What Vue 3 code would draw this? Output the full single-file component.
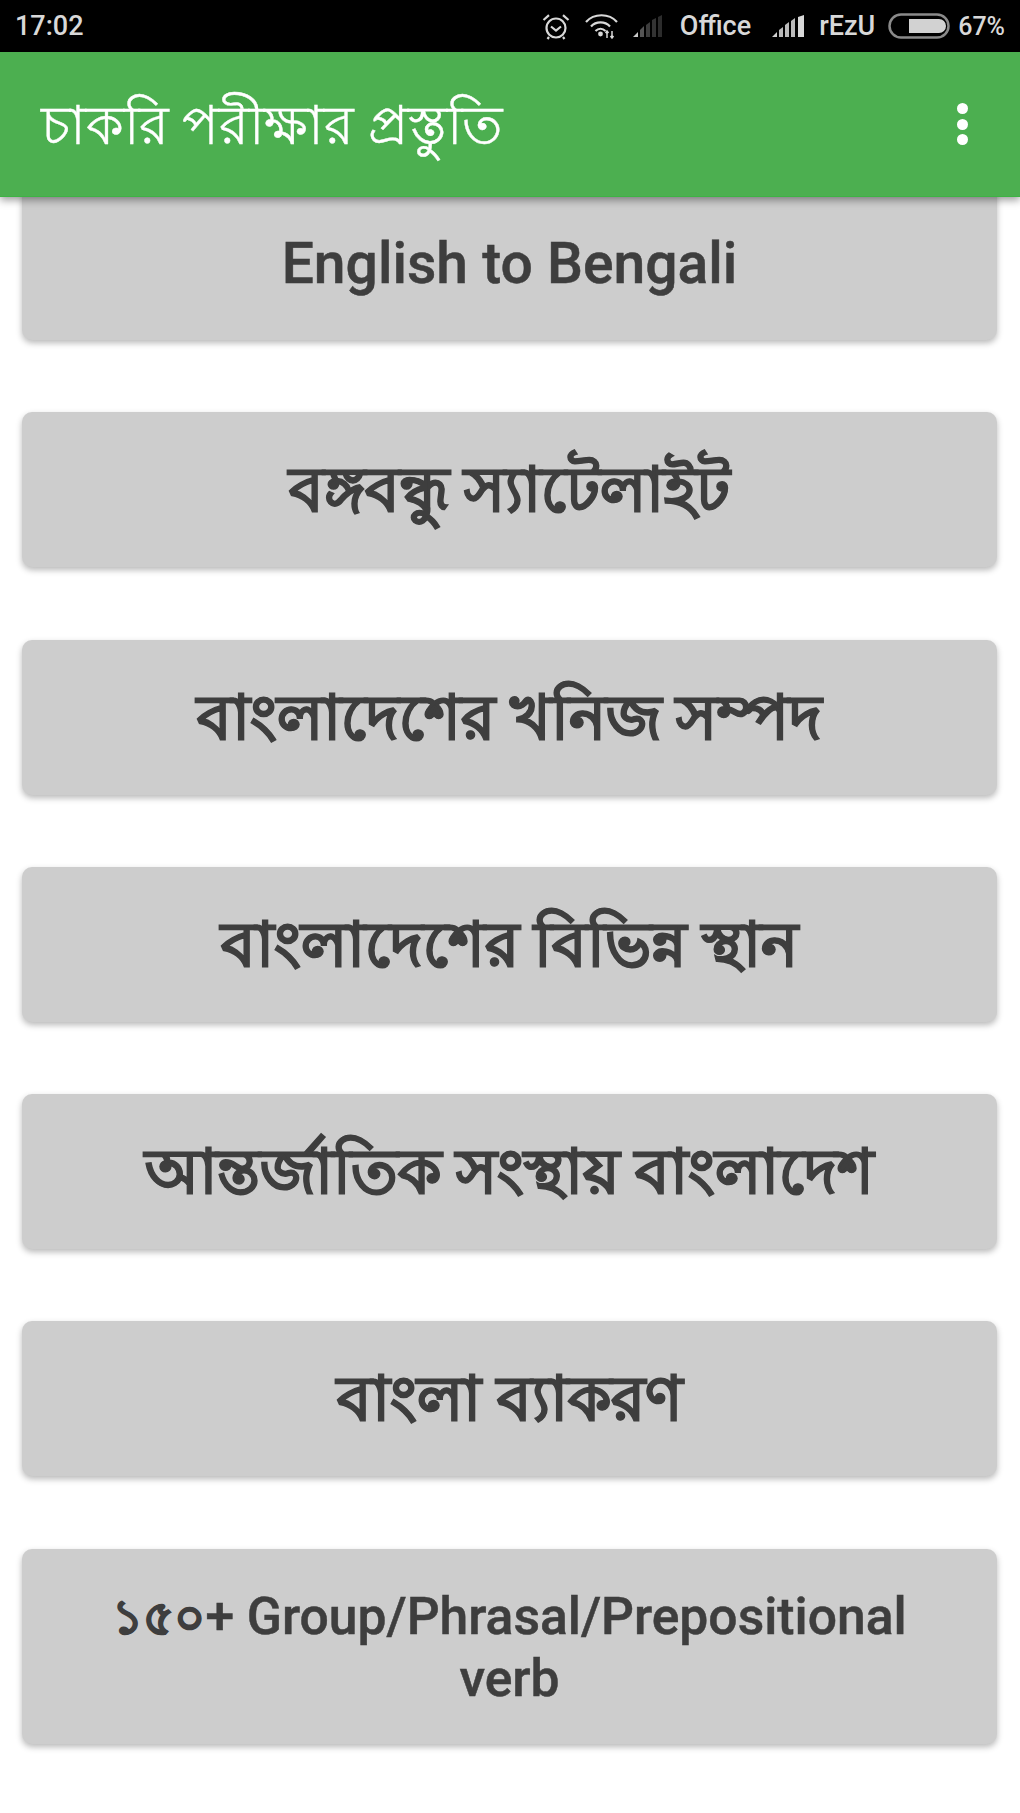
<script setup>
const items = [
  { text: 'English to Bengali', kind: 'en' },
  { text: 'বঙ্গবন্ধু স্যাটেলাইট', kind: 'bn' },
  { text: 'বাংলাদেশের খনিজ সম্পদ', kind: 'bn' },
  { text: 'বাংলাদেশের বিভিন্ন স্থান', kind: 'bn' },
  { text: 'আন্তর্জাতিক সংস্থায় বাংলাদেশ', kind: 'bn' },
  { text: 'বাংলা ব্যাকরণ', kind: 'bn' },
  { prefix: '১৫০', text: '+ Group/Phrasal/Prepositional verb', kind: 'mix' }
]
</script>

<template>
  <div class="screen">
    <div class="status">
      <span class="time">17:02</span>
      <div class="status-right">
        <svg class="alarm" width="28" height="27" viewBox="0 0 28 27" fill="none" stroke="#d8d8d8" stroke-width="2.2">
          <circle cx="14" cy="15" r="9.5" />
          <path d="M9 13.5l5 4 5-4" />
          <path d="M1.5 7L7 2.2M26.500 7L21 2.2M7 24l-1.500 2M21 24l1.500 2" />
        </svg>
        <svg class="wifi" width="33" height="26" viewBox="0 0 33 26" fill="none" stroke="#d8d8d8" stroke-width="2.2">
          <path d="M1 9C9 0 24 0 32 9M6 13.500C11 8 20 8 25 13.500M10.500 18c3-3 7-3 10 0" />
          <circle cx="15.500" cy="21" r="2.400" fill="#d8d8d8" stroke="none" />
          <path d="M22 25v-7M20.500 20l1.500-2 1.500 2M27 18v7M25.500 23l1.500 2 1.500-2" stroke-width="1.500" />
        </svg>
        <svg class="sig-off" width="32" height="22" viewBox="0 0 32 22">
          <polygon points="0,22 5,17 5,22" fill="#c8c8c8" />
          <polygon points="7,22 7,15 11,11 11,22" fill="#555" />
          <polygon points="13,22 13,10 17,7 17,22" fill="#3d3d3d" />
          <polygon points="19,22 19,5 23,3 23,22" fill="#333" />
          <polygon points="25,22 25,2 29,0 29,22" fill="#2c2c2c" />
        </svg>
        <span class="label office">Office</span>
        <svg class="sig-on" width="33" height="22" viewBox="0 0 33 22">
          <polygon points="0,22 5,17 5,22" fill="#d0d0d0" />
          <polygon points="7,22 7,15 11,12 11,22" fill="#bbb" />
          <polygon points="13,22 13,10 17,7 17,22" fill="#bbb" />
          <polygon points="19,22 19,6 23,3 23,22" fill="#bbb" />
          <polygon points="26,22 26,2 32,0 32,22" fill="#d8d8d8" />
        </svg>
        <span class="label rezu">rEzU</span>
        <svg class="batt" width="62" height="26" viewBox="0 0 62 26">
          <rect x="1.500" y="1.500" width="59" height="23" rx="11.500" fill="none" stroke="#8a8a8a" stroke-width="2.500" />
          <path d="M21 6h30a7 7 0 0 1 0 14H21z" fill="#d2d2d2" />
        </svg>
        <span class="label pct">67%</span>
      </div>
    </div>
    <header class="bar">
      <h1 class="title">চাকরি পরীক্ষার প্রস্তুতি</h1>
      <div class="menu"><i></i><i></i><i></i></div>
    </header>
    <main class="list">
      <button v-for="item in items" :key="item.text" class="btn" :class="item.kind"><span v-if="item.prefix" class="digits">{{ item.prefix }}</span>{{ item.text }}</button>
    </main>
  </div>
</template>

<style scoped>
.screen {
  width: 1020px;
  height: 1813px;
  overflow: hidden;
  background: #fff;
  display: flex;
  flex-direction: column;
  font-family: Roboto, "Noto Sans", sans-serif;
}
.status {
  height: 52px;
  flex: none;
  background: #000;
  color: #d8d8d8;
  display: flex;
  align-items: center;
  justify-content: space-between;
  padding: 0 15px 0 15px;
  font-weight: 500;
  font-size: 27px;
}
.status-right {
  display: flex;
  align-items: center;
}
.alarm { margin-right: 15px; }
.wifi { margin-right: 15px; }
.sig-off { margin-right: 15px; }
.office { margin-right: 21px; }
.sig-on { margin-right: 14px; }
.rezu { margin-right: 13px; }
.batt { margin-right: 8px; }
.label { font-size: 27px; }
.pct { font-size: 25px; }
.bar {
  height: 145px;
  flex: none;
  box-sizing: border-box;
  background: #4caf50;
  border-bottom: 1px solid #3db344;
  display: flex;
  align-items: center;
  justify-content: space-between;
  padding: 0 52px 0 41px;
  position: relative;
  z-index: 2;
  box-shadow: 0 3px 8px rgba(0, 0, 0, 0.4);
}
.title {
  margin: 0;
  padding-top: 9px;
  font-size: 54px;
  font-weight: 400;
  color: #fff;
  -webkit-text-stroke: 0.4px #fff;
}
.menu {
  display: flex;
  flex-direction: column;
  gap: 4.500px;
}
.menu i {
  width: 11px;
  height: 11px;
  border-radius: 50%;
  background: #fff;
}
.list {
  display: flex;
  flex-direction: column;
  gap: 72.300px;
  padding: 0 23px 0 22px;
  margin-top: -12px;
}
.btn {
  min-height: 155px;
  border: 0;
  border-radius: 10px;
  background: #cdcdcd;
  color: #3e3e3e;
  font-family: Roboto, "Noto Sans", sans-serif;
  line-height: 61px;
  padding: 37px 60px 35px;
  box-shadow: 0 3px 6px rgba(0, 0, 0, 0.28);
}
.en { font-size: 57px; font-weight: 500; -webkit-text-stroke: 0.5px #3e3e3e; }
.bn { font-size: 61.500px; font-weight: 700; -webkit-text-stroke: 1.2px #3e3e3e; }
.mix { font-size: 51.600px; font-weight: 500; -webkit-text-stroke: 0.5px #3e3e3e; }
.digits { font-size: 48px; font-weight: 700; -webkit-text-stroke: 1.2px #3e3e3e; }
</style>

<style>
body { margin: 0; }
</style>
